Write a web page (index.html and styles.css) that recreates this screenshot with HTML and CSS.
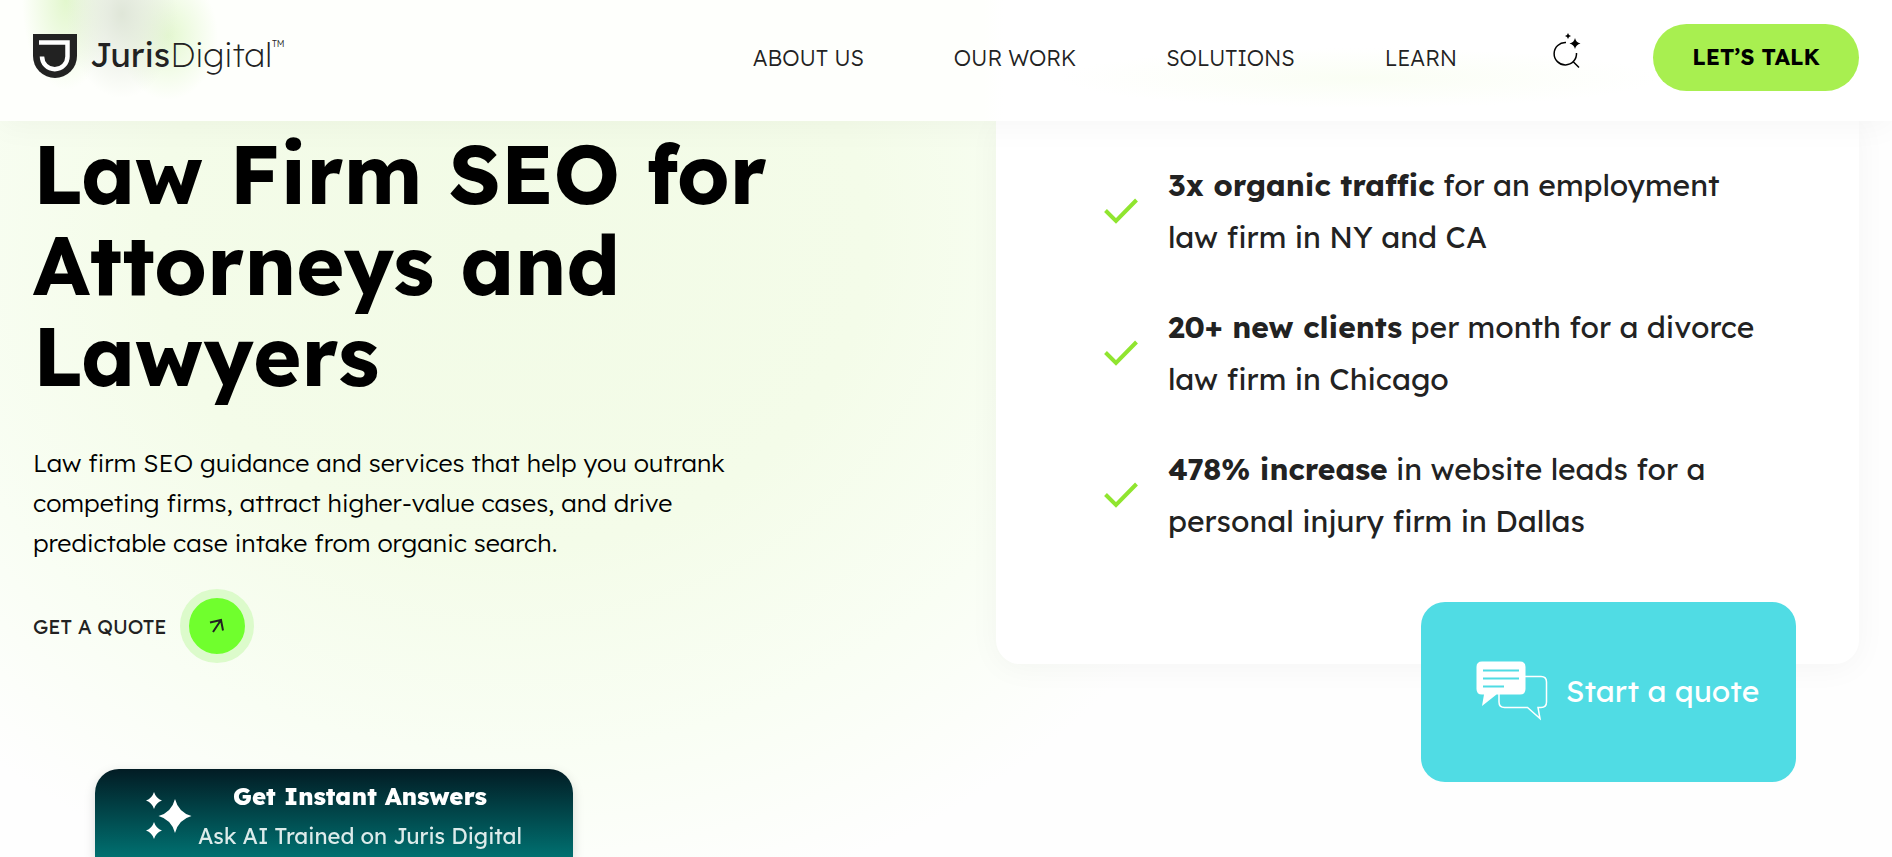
FILE: index.html
```html
<!DOCTYPE html>
<html lang="en">
<head>
    <meta charset="UTF-8">
    <meta name="viewport" content="width=device-width, initial-scale=1.0">
    <title>Law Firm SEO | Juris Digital</title>
    <link rel="stylesheet" href="styles.css">
</head>
<body>
    <header class="site-header">
        <a class="logo" href="#">
            <svg class="logo-mark" viewBox="0 0 44 44" aria-hidden="true">
                <path fill="#222" d="M0 0h44v22a22 22 0 0 1-44 0z"/>
                <path fill="none" stroke="#fff" stroke-width="4.500" d="M6 8.500H34.500V22.500A12.750 12.750 0 0 1 9 22.500" />
            </svg>
            <span class="logo-text"><b>Juris</b>Digital</span><span class="tm">TM</span>
        </a>
        <nav class="main-nav">
            <a href="#">ABOUT US</a>
            <a href="#">OUR WORK</a>
            <a href="#">SOLUTIONS</a>
            <a href="#">LEARN</a>
        </nav>
        <button class="search" type="button" aria-label="Search">
            <svg viewBox="0 0 28 36" aria-hidden="true">
                <path fill="none" stroke="#000" stroke-width="1.500" d="M13 9.500A11.200 11.200 0 1 0 23.500 20M20 28.500l6 6"/>
                <path d="M15 0q.5 2.500 3 3-2.500.5-3 3-.5-2.500-3-3 2.500-.5 3-3zM22 5q1 4.500 5.500 5.500-4.500 1-5.500 5.500-1-4.500-5.500-5.500 4.500-1 5.500-5.500z"/>
            </svg>
        </button>
        <a class="talk" href="#">LET’S TALK</a>
    </header>

    <main class="hero">
        <section class="intro">
            <h1>Law Firm SEO for Attorneys and Lawyers</h1>
            <p>Law firm SEO guidance and services that help you outrank competing firms, attract higher-value cases, and drive predictable case intake from organic search.</p>
            <a class="get-quote" href="#">
                GET A QUOTE
                <span class="circle">
                    <svg viewBox="0 0 16 16" aria-hidden="true"><path fill="none" stroke="#222" stroke-width="2" d="M4 14L12 2M1 4.500L12 2l2 10.500"/></svg>
                </span>
            </a>
        </section>

        <section class="results">
            <ul>
                <li>
                    <svg class="check" viewBox="0 0 34 26" aria-hidden="true"><path d="M1.500 12.500L12 23 32.500 2"/></svg>
                    <span><b>3x organic traffic</b> for an employment<br>law firm in NY and CA</span>
                </li>
                <li>
                    <svg class="check" viewBox="0 0 34 26" aria-hidden="true"><path d="M1.500 12.500L12 23 32.500 2"/></svg>
                    <span><b>20+ new clients</b> per month for a divorce<br>law firm in Chicago</span>
                </li>
                <li>
                    <svg class="check" viewBox="0 0 34 26" aria-hidden="true"><path d="M1.500 12.500L12 23 32.500 2"/></svg>
                    <span><b>478% increase</b> in website leads for a<br>personal injury firm in Dallas</span>
                </li>
            </ul>
            <a class="start-quote" href="#">
                <svg viewBox="0 0 72 60" aria-hidden="true">
                    <path fill="none" stroke="#fff" stroke-width="1.500" d="M49 15.500h16q5.500 0 5.500 5.500v20q0 5.500-5.500 5.500h-3l2 11-12.500-11H28.500q-5.500 0-5.500-5.500V33"/>
                    <path fill="#fff" d="M6 .5h38q5.500 0 5.500 5.500v22q0 5.500-5.500 5.500H20.500L6 45l2-11.500H6Q.5 33.500.5 28V6Q.5.5 6 .5z"/>
                    <path fill="none" stroke="#50dce4" stroke-width="2" d="M7 9.500h36M7 17.500h36M7 25.500h21"/>
                </svg>
                Start a quote
            </a>
        </section>
    </main>

    <button class="ask-ai" type="button">
        <svg viewBox="0 0 46 48" aria-hidden="true">
            <path fill="#fff" d="M29 7q3.500 13.500 16.500 17-13 3.500-16.500 17-3.500-13.500-16.500-17 13-3.500 16.500-17zM8 0q2 6.500 8 8.500-6 2-8 8.500-2-6.500-8-8.500 6-2 8-8.500zM8 30q2 6.500 8 8.500-6 2-8 8.500-2-6.500-8-8.500 6-2 8-8.500z"/>
        </svg>
        <span class="ask-text">
            <b>Get Instant Answers</b>
            <span>Ask AI Trained on Juris Digital</span>
        </span>
    </button>
</body>
</html>
```
FILE: styles.css
```css
* {
    box-sizing: border-box;
}

body {
    margin: 0;
    min-height: 100vh;
    font-family: Lexend, Inter, sans-serif;
    color: #222;
    background: radial-gradient(ellipse 42% 80% at 27% 28%, #f2fbe6 0%, #f4fce9 45%, #f9fef4 75%, #fefefe 100%);
}

a {
    color: inherit;
    text-decoration: none;
}

button {
    font-family: inherit;
    border: 0;
    cursor: pointer;
}

/* header */
.site-header {
    position: relative;
    z-index: 2;
    display: flex;
    align-items: center;
    height: 121px;
    padding: 0 33px 6px;
    background:
        radial-gradient(ellipse 56px 84px at 122px 14px, #dfe6d8, transparent),
        radial-gradient(ellipse 44px 90px at 66px 0, #e2f7cd, transparent),
        radial-gradient(ellipse 50px 64px at 168px 36px, #e4f8d0, transparent),
        radial-gradient(ellipse 300px 30px at 1360px 78px, #fafef4, transparent),
        linear-gradient(90deg, #fefffc 52%, #fff 53%);
    box-shadow: 0 4px 32px rgba(0, 0, 0, 0.04);
}

.logo {
    display: flex;
    align-items: center;
    margin: 0 auto 4px 0;
}

.logo-mark {
    width: 44px;
    height: 44px;
    margin-right: 13px;
}

.logo-text {
    padding-bottom: 3px;
    font-size: 34px;
    font-weight: 200;
    line-height: 41px;
}

.logo-text b {
    font-weight: 400;
}

.tm {
    align-self: flex-start;
    padding-top: 4px;
    font-size: 9px;
    font-weight: 300;
}

.main-nav {
    display: flex;
    gap: 90px;
    font-size: 22px;
    font-weight: 300;
}

.search {
    width: 28px;
    margin: 0 72px 14px 96px;
    padding: 0;
    background: none;
}

.search svg {
    display: block;
    width: 28px;
    height: 36px;
}

.talk {
    width: 206px;
    line-height: 67px;
    border-radius: 34px;
    background: #a8ef50;
    color: #000;
    font-size: 22px;
    font-weight: 700;
    text-align: center;
}

/* hero */
.hero {
    display: grid;
    grid-template-columns: 1fr 863px;
    align-items: start;
    padding: 0 33px;
}

.intro {
    padding: 7px 0 0;
}

.intro h1 {
    max-width: 800px;
    margin: 0;
    color: #000;
    font-size: 82px;
    line-height: 91px;
}

.intro p {
    max-width: 720px;
    margin: 42px 0 26px;
    color: #000;
    font-size: 25px;
    font-weight: 300;
    line-height: 40px;
}

.get-quote {
    display: inline-flex;
    align-items: center;
    gap: 13px;
    font-size: 20px;
}

.circle {
    display: grid;
    place-items: center;
    width: 74px;
    height: 74px;
    border: 9px solid #dcfbcb;
    border-radius: 50%;
    background: #70ff2d;
}

.circle svg {
    width: 16px;
    height: 16px;
}

.results {
    position: relative;
    height: 543px;
    padding: 38px 80px 0 108px;
    border-radius: 0 0 24px 24px;
    background: #fff;
    box-shadow: 0 4px 32px rgba(0, 0, 0, 0.04);
}

.results ul {
    display: grid;
    gap: 38px;
    margin: 0;
    padding: 0;
    list-style: none;
}

.results li {
    display: flex;
    align-items: center;
    gap: 30px;
    font-size: 30px;
    line-height: 52px;
}

.check {
    width: 34px;
    height: 26px;
    flex: none;
    fill: none;
    stroke: #90e52f;
    stroke-width: 4;
}

/* hangs over the bottom edge of the card */
.start-quote {
    position: absolute;
    right: 63px;
    bottom: -118px;
    display: flex;
    align-items: center;
    justify-content: center;
    gap: 18px;
    width: 375px;
    height: 180px;
    padding: 0 0 2px 18px;
    border-radius: 24px;
    background: #50dce4;
    color: #fff;
    font-size: 30px;
}

.start-quote svg {
    width: 72px;
    height: 60px;
}

/* chat tab */
.ask-ai {
    position: fixed;
    bottom: 0;
    left: 95px;
    display: flex;
    justify-content: center;
    gap: 6px;
    width: 478px;
    height: 88px;
    padding: 8px 0 0;
    border-radius: 24px 24px 0 0;
    background: linear-gradient(#021c24, #007070);
    box-shadow: 0 4px 12px rgba(0, 0, 0, 0.15);
    color: #fff;
}

.ask-ai svg {
    width: 46px;
    height: 48px;
    margin-top: 15px;
}

.ask-text {
    display: grid;
    font-size: 24px;
    line-height: 38px;
}

.ask-text b {
    font-weight: 800;
}

.ask-text span {
    color: #dcebea;
    font-size: 22px;
    font-weight: 400;
}
```
